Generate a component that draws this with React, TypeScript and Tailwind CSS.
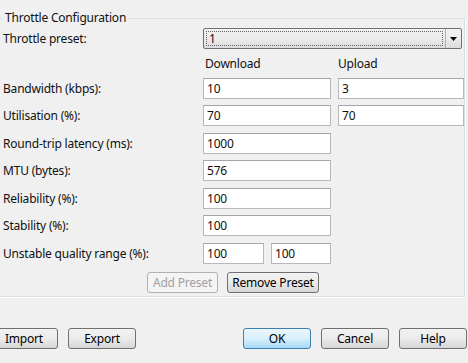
import React from "react";

type BtnProps = { label: string; w: string; primary?: boolean; disabled?: boolean };

const Button = ({ label, w, primary, disabled }: BtnProps) => {
  let cls =
    "border-[#707070] text-black bg-gradient-to-b from-[#f2f2f2] via-[#ebebeb] to-[#d6d6d6]";
  if (primary) cls = "border-[#3c7fb1] text-black bg-gradient-to-b from-[#eaf6fd] via-[#d9f0fc] to-[#a7d9f5]";
  if (disabled) cls = "border-[#adb2b5] text-[#a0a0a0] bg-[#f4f4f4]";
  return (
    <button
      disabled={disabled}
      className={`${w} h-[21px] shrink-0 rounded-[3px] border text-[12px] leading-none ${cls}`}
    >
      {label}
    </button>
  );
};

const Field = ({ value, w }: { value: string; w: string }) => (
  <div
    className={`${w} h-[21px] shrink-0 border border-[#b5b9bf] border-t-[#a3a6ab] bg-white pl-[3px] flex items-center leading-none`}
  >
    {value}
  </div>
);

const Row = ({ label, mt, children }: { label: string; mt: string; children: React.ReactNode }) => (
  <div className={`flex items-center h-[21px] ${mt}`}>
    <div className="w-[200px] shrink-0">{label}</div>
    <div className="flex gap-[7px]">{children}</div>
  </div>
);

export default function App() {
  return (
    <div className="w-[468px] h-[363px] overflow-hidden bg-[#f0f0f0] text-[12px] tracking-[-0.2px] text-[#111] font-['Noto_Sans',sans-serif]">
      <fieldset className="-ml-[3px] mt-[10px] w-[468px] h-[287px] border border-[#d5dfe5] shadow-[1px_1px_0_#ffffff] pl-[5px]">
        <legend className="ml-0 px-[2px] leading-[16px]">Throttle Configuration</legend>

        <div className="flex items-center h-[21px] mt-[2px]">
          <div className="w-[200px] shrink-0">Throttle preset:</div>
          <div className="w-[259px] h-[21px] flex rounded-[2px] border border-[#707070] bg-gradient-to-b from-[#f2f2f2] via-[#ebebeb] to-[#dcdcdc]">
            <div className="flex-1 m-[2px] border border-dotted border-[#666] flex items-center pl-[2px] leading-none">
              1
            </div>
            <div className="w-[16px] border-l border-[#b0b0b0] flex items-center justify-center">
              <svg width="7" height="4" viewBox="0 0 7 4">
                <path d="M0 0h7L3.5 4z" fill="#000" />
              </svg>
            </div>
          </div>
        </div>

        <div className="flex h-[16px] mt-[7px] items-center">
          <div className="w-[202px] shrink-0" />
          <div className="w-[133px] shrink-0">Download</div>
          <div>Upload</div>
        </div>

        <Row label="Bandwidth (kbps):" mt="mt-[6px]">
          <Field value="10" w="w-[128px]" />
          <Field value="3" w="w-[126px]" />
        </Row>
        <Row label="Utilisation (%):" mt="mt-[6px]">
          <Field value="70" w="w-[128px]" />
          <Field value="70" w="w-[126px]" />
        </Row>
        <Row label="Round-trip latency (ms):" mt="mt-[7px]">
          <Field value="1000" w="w-[128px]" />
        </Row>
        <Row label="MTU (bytes):" mt="mt-[6px]">
          <Field value="576" w="w-[128px]" />
        </Row>
        <Row label="Reliability (%):" mt="mt-[7px]">
          <Field value="100" w="w-[128px]" />
        </Row>
        <Row label="Stability (%):" mt="mt-[6px]">
          <Field value="100" w="w-[128px]" />
        </Row>
        <Row label="Unstable quality range (%):" mt="mt-[7px]">
          <Field value="100" w="w-[61px]" />
          <Field value="100" w="w-[60px]" />
        </Row>

        <div className="flex mt-[8px] pl-[144px] gap-[9px]">
          <Button label="Add Preset" w="w-[71px]" disabled />
          <Button label="Remove Preset" w="w-[92px]" />
        </div>
      </fieldset>

      <div className="flex justify-between mt-[31px] -ml-[10px] w-[477px]">
        <div className="flex gap-[10px]">
          <Button label="Import" w="w-[68px]" />
          <Button label="Export" w="w-[68px]" />
        </div>
        <div className="flex gap-[10px]">
          <Button label="OK" w="w-[68px]" primary />
          <Button label="Cancel" w="w-[68px]" />
          <Button label="Help" w="w-[68px]" />
        </div>
      </div>
    </div>
  );
}
